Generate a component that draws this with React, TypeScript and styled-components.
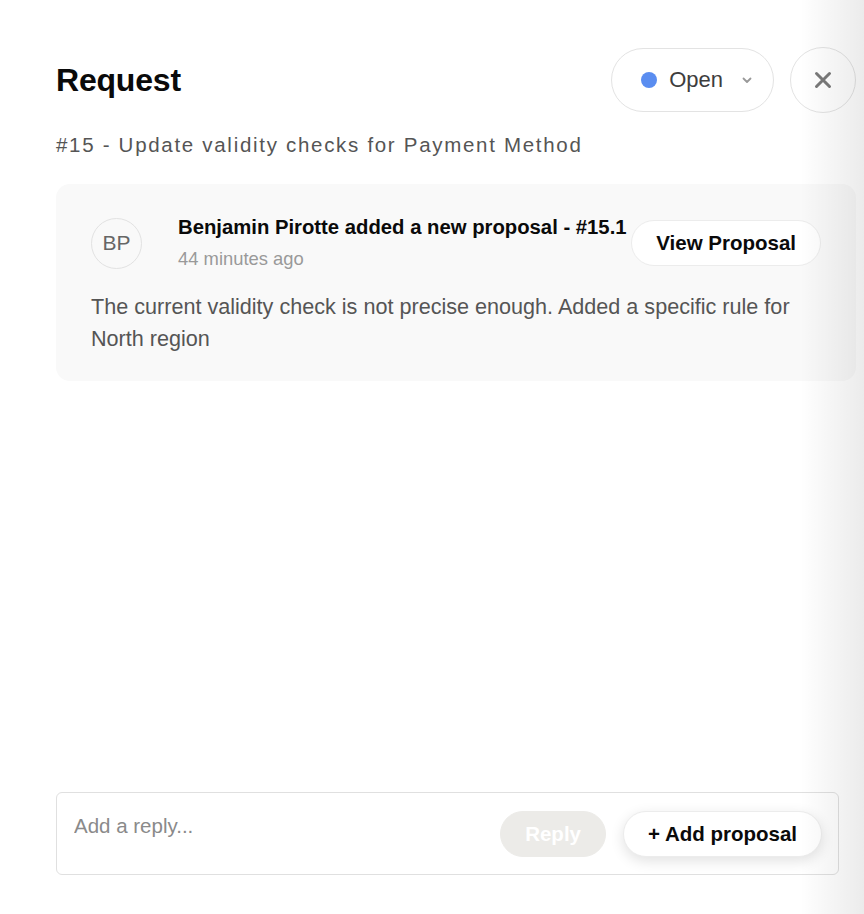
import React from 'react';
import styled, { createGlobalStyle } from 'styled-components';

const GlobalStyle = createGlobalStyle`
  html, body {
    margin: 0;
    padding: 0;
    background: #ffffff;
    font-family: "Liberation Sans", Arial, sans-serif;
  }
  * {
    box-sizing: border-box;
  }
`;

const Panel = styled.div`
  position: relative;
  display: flex;
  flex-direction: column;
  height: 914px;
  padding: 47px 8px 39px 56px;
  overflow: hidden;

  &::after {
    content: '';
    position: absolute;
    top: 0;
    right: 0;
    bottom: 0;
    width: 64px;
    background: linear-gradient(to right, rgba(0, 0, 0, 0), rgba(0, 0, 0, 0.08));
    pointer-events: none;
  }
`;

const Header = styled.div`
  display: flex;
  align-items: center;
  justify-content: space-between;
`;

const Title = styled.h1`
  margin: 0;
  font-size: 32px;
  font-weight: 700;
  color: #0a0a0a;
  letter-spacing: -0.2px;
`;

const HeaderActions = styled.div`
  display: flex;
  align-items: center;
  gap: 16px;
`;

const StatusPill = styled.button`
  display: flex;
  align-items: center;
  height: 64px;
  padding: 0 20px 0 29px;
  border: 1px solid #e3e3e3;
  border-radius: 32px;
  background: #ffffff;
  font-family: inherit;
  font-size: 22px;
  color: #3d3d3d;
  cursor: pointer;
`;

const Dot = styled.span`
  width: 16px;
  height: 16px;
  border-radius: 50%;
  background: #5a8df0;
  margin-right: 12px;
`;

const Chevron = styled.svg`
  margin-left: 18px;
  width: 12px;
  height: 12px;
`;

const CloseButton = styled.button`
  display: flex;
  align-items: center;
  justify-content: center;
  width: 66px;
  height: 66px;
  border: 1px solid #e3e3e3;
  border-radius: 50%;
  background: #ffffff;
  cursor: pointer;
  padding: 0;
`;

const Subtitle = styled.div`
  margin-top: 20px;
  font-size: 20.5px;
  color: #555555;
  letter-spacing: 1.7px;
`;

const Card = styled.div`
  margin-top: 27px;
  background: #f9f9f9;
  border-radius: 14px;
  padding: 32px 35px 26px 35px;
`;

const CardHead = styled.div`
  display: flex;
  align-items: center;
`;

const Avatar = styled.div`
  width: 51px;
  height: 51px;
  flex-shrink: 0;
  border-radius: 50%;
  border: 1px solid #e2e2e2;
  display: flex;
  align-items: center;
  justify-content: center;
  font-size: 21px;
  color: #666666;
  margin-right: 36px;
`;

const Meta = styled.div`
  flex: 1;
  display: flex;
  flex-direction: column;
  gap: 9px;
`;

const Author = styled.div`
  font-size: 20.3px;
  font-weight: 700;
  color: #0a0a0a;
  white-space: nowrap;
`;

const Time = styled.div`
  font-size: 18.4px;
  color: #999999;
`;

const PillButton = styled.button<{ $tone?: 'white' | 'muted'; $raised?: boolean }>`
  height: 46px;
  padding: 0 24px;
  border-radius: 23px;
  border: 1px solid ${p => (p.$tone === 'muted' ? '#ecebe8' : '#ececec')};
  background: ${p => (p.$tone === 'muted' ? '#ecebe8' : '#ffffff')};
  color: ${p => (p.$tone === 'muted' ? '#ffffff' : '#0a0a0a')};
  font-family: inherit;
  font-size: 20.5px;
  font-weight: 700;
  cursor: pointer;
  white-space: nowrap;
  box-shadow: ${p => (p.$raised ? '0 4px 14px rgba(0, 0, 0, 0.12)' : 'none')};
`;

const Body = styled.p`
  margin: 21px 0 0 0;
  font-size: 21.6px;
  line-height: 32px;
  color: #555555;
`;

const Composer = styled.div`
  margin-top: auto;
  margin-right: 17px;
  height: 83px;
  border: 1px solid #e0e0e0;
  border-radius: 6px;
  display: flex;
  align-items: flex-start;
  padding: 18px 16px 0 17px;
`;

const ReplyInput = styled.input`
  flex: 1;
  border: none;
  outline: none;
  background: transparent;
  font-family: inherit;
  font-size: 20.5px;
  color: #333333;
  padding: 0;
  height: 30px;

  &::placeholder {
    color: #8a8a8a;
  }
`;

const ComposerActions = styled.div`
  display: flex;
  gap: 17px;
`;

export default function App() {
  return (
    <>
      <GlobalStyle />
      <Panel>
        <Header>
          <Title>Request</Title>
          <HeaderActions>
            <StatusPill>
              <Dot />
              Open
              <Chevron viewBox="0 0 12 12" fill="none">
                <path d="M2.5 4.5 L6 8 L9.5 4.5" stroke="#999" strokeWidth="1.8" strokeLinecap="round" strokeLinejoin="round" />
              </Chevron>
            </StatusPill>
            <CloseButton aria-label="Close">
              <svg width="20" height="20" viewBox="0 0 20 20">
                <path d="M3.5 3.5 L16.5 16.5 M16.5 3.5 L3.5 16.5" stroke="#7a7a7a" strokeWidth="3" strokeLinecap="round" />
              </svg>
            </CloseButton>
          </HeaderActions>
        </Header>

        <Subtitle>#15 - Update validity checks for Payment Method</Subtitle>

        <Card>
          <CardHead>
            <Avatar>BP</Avatar>
            <Meta>
              <Author>Benjamin Pirotte added a new proposal - #15.1</Author>
              <Time>44 minutes ago</Time>
            </Meta>
            <PillButton>View Proposal</PillButton>
          </CardHead>
          <Body>
            The current validity check is not precise enough. Added a specific rule for North region
          </Body>
        </Card>

        <Composer>
          <ReplyInput placeholder="Add a reply..." />
          <ComposerActions>
            <PillButton $tone="muted">Reply</PillButton>
            <PillButton $raised>+ Add proposal</PillButton>
          </ComposerActions>
        </Composer>
      </Panel>
    </>
  );
}
